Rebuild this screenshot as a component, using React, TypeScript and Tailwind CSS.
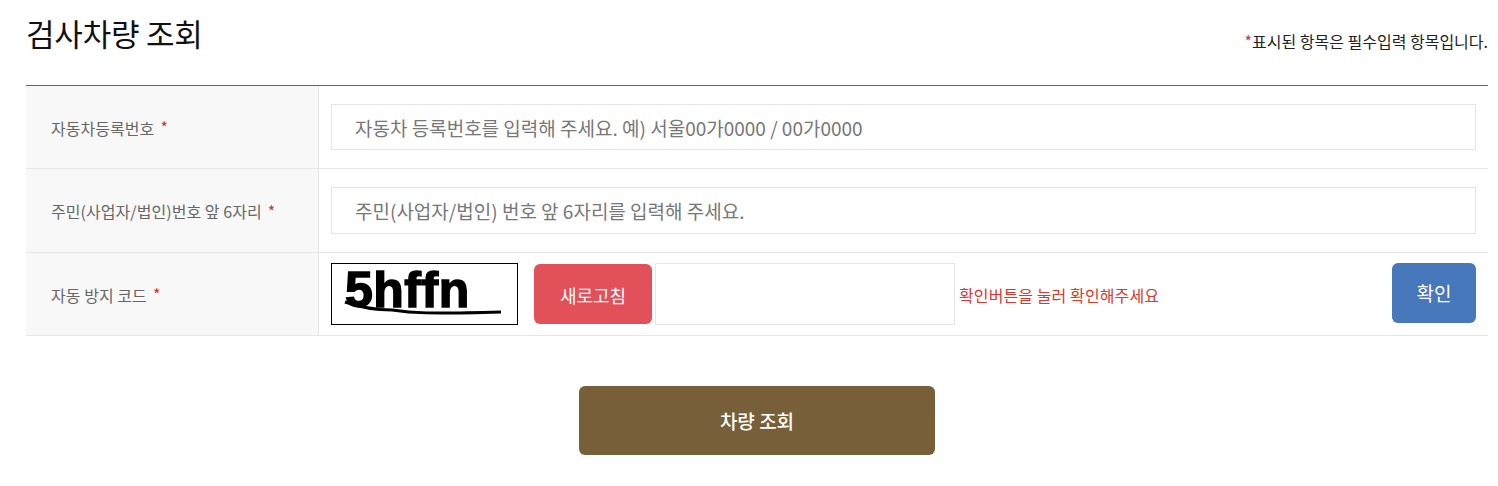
const font = "font-['Noto_Sans_CJK_KR','Noto_Sans',sans-serif]";

const Label = ({ text }: { text: string }) => (
  <div className="w-[293px] shrink-0 bg-[#f8f8f8] border-r border-[#e5e5e5] pl-[25px] flex items-center text-[16px] tracking-[0.05px] text-[#666]">
    <span className="mt-[1px]">{text}</span>
    <span className="ml-[6px] text-[#c0392b]">*</span>
  </div>
);

const TextRow = ({ label, placeholder, height, inputHeight }: { label: string; placeholder: string; height: string; inputHeight: string }) => (
  <div className={`flex border-b border-[#e5e5e5] ${height}`}>
    <Label text={label} />
    <div className="flex-1 flex items-center pl-3 pr-3">
      <input
        className={`w-full ${inputHeight} border border-[#e5e5e5] pl-[23px] text-[19px] text-[#666] placeholder:text-[#777] outline-none`}
        placeholder={placeholder}
      />
    </div>
  </div>
);

export default function App() {
  return (
    <div className={`${font} w-[1498px] h-[486px] bg-white overflow-hidden pl-[26px] pr-[10px]`}>
      {/* Title */}
      <div className="flex justify-between h-[85px]">
        <h2 className="text-[31px] leading-[44px] pt-[11px] tracking-[-0.2px] text-[#111]">검사차량 조회</h2>
        <p className="mt-[30px] text-[16px] leading-[22px] text-[#222]">
          <span className="text-[#c0392b]">*</span>표시된 항목은 필수입력 항목입니다.
        </p>
      </div>

      {/* Form table */}
      <div className="border-t border-[#666]">
        <TextRow label="자동차등록번호" placeholder="자동차 등록번호를 입력해 주세요. 예) 서울00가0000 / 00가0000" height="h-[83px]" inputHeight="h-[46px]" />
        <TextRow label="주민(사업자/법인)번호 앞 6자리" placeholder="주민(사업자/법인) 번호 앞 6자리를 입력해 주세요." height="h-[84px]" inputHeight="h-[47px]" />
        <div className="flex h-[83px] border-b border-[#e5e5e5]">
          <Label text="자동 방지 코드" />
          <div className="flex-1 flex items-center pl-3 pr-3">
            {/* Captcha */}
            <div className="relative w-[187px] h-[62px] border border-black overflow-hidden shrink-0">
              <span className="absolute left-[13px] top-[-5px] font-['Liberation_Sans',sans-serif] font-bold text-[50px] leading-[62px] tracking-[0.5px] text-black [-webkit-text-stroke:1.5px_black]">
                5hffn
              </span>
              <svg className="absolute inset-0" width="185" height="60" viewBox="0 0 185 60">
                <path d="M13 38 C 30 44, 45 46, 60 46 C 80 49, 95 50, 169 48" fill="none" stroke="#000" strokeWidth="3" />
              </svg>
            </div>
            <button className="ml-4 pt-[2px] w-[118px] h-[60px] shrink-0 rounded-[6px] bg-[#e2505a] text-white text-[18px]">새로고침</button>
            <input className="ml-[3px] w-[300px] h-[62px] shrink-0 border border-[#e5e5e5] outline-none" />
            <span className="ml-1 mt-[2px] text-[16px] tracking-[0.1px] text-[#e0352b]">확인버튼을 눌러 확인해주세요</span>
            <button className="ml-auto mb-[2px] w-[84px] h-[60px] shrink-0 rounded-[6px] bg-[#4878bc] text-white text-[19px]">확인</button>
          </div>
        </div>
      </div>

      {/* Submit */}
      <div className="flex pl-[553px] pt-[50px]">
        <button className="w-[356px] h-[69px] pt-[2px] rounded-[6px] bg-[#776039] text-white text-[19px] font-medium">차량 조회</button>
      </div>
    </div>
  );
}
